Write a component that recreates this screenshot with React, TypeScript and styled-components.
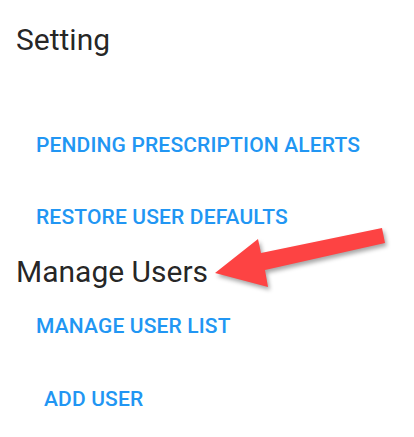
import styled, { createGlobalStyle } from 'styled-components'

const GlobalStyle = createGlobalStyle`
    body {
        margin: 0;
        background: #ffffff;
        font-family: Roboto, "Noto Sans", sans-serif;
    }
`

const Page = styled.div`
    position: relative;
    width: 414px;
    height: 437px;
    padding: 22px 16px 0;
    box-sizing: border-box;
    display: flex;
    flex-direction: column;
    align-items: flex-start;
    overflow: hidden;
`

const Title = styled.h2<{ $gap: number }>`
    margin: 0 0 ${p => p.$gap}px 0;
    font-size: 30px;
    line-height: 36px;
    font-weight: 400;
    color: rgba(0, 0, 0, 0.87);
`

const LinkButton = styled.button<{ $gap: number; $indent?: number }>`
    margin: 0 0 ${p => p.$gap}px ${p => p.$indent ?? 0}px;
    padding: 9px 20px;
    border: 0;
    background: transparent;
    font-family: Roboto, sans-serif;
    font-size: 21px;
    line-height: 24px;
    font-weight: 500;
    letter-spacing: 0.15px;
    text-transform: uppercase;
    color: #2196f3;
    cursor: pointer;
`

const Arrow = styled.svg`
    position: absolute;
    left: 0;
    top: 0;
    pointer-events: none;
    filter: drop-shadow(2px 3px 2px rgba(0, 0, 0, 0.35));
`

const App = () => (
    <>
        <GlobalStyle />
        <Page>
            <Title $gap={66}>Setting</Title>
            <LinkButton $gap={30}>Pending Prescription Alerts</LinkButton>
            <LinkButton $gap={16}>Restore User Defaults</LinkButton>
            <Title $gap={15}>Manage Users</Title>
            <LinkButton $gap={31}>Manage User List</LinkButton>
            <LinkButton $gap={0} $indent={8}>Add User</LinkButton>
            <Arrow width="414" height="437" viewBox="0 0 414 437">
                <polygon
                    points="215,273 258,239 261,253 382,228 385,243 265,270 268,287"
                    fill="#fd4343"
                />
            </Arrow>
        </Page>
    </>
)

export default App
